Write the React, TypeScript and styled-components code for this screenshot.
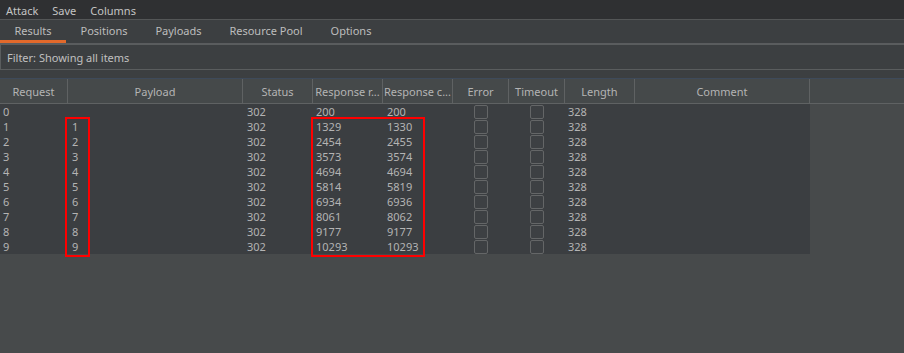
import React from 'react';
import { styled, createGlobalStyle } from 'styled-components';

const GlobalStyle = createGlobalStyle`
  html, body {
    margin: 0;
    padding: 0;
    background: #3c3f41;
    width: 904px;
    height: 353px;
    overflow: hidden;
  }
  * { box-sizing: border-box; }
`;

const Page = styled.div`
  width: 904px;
  height: 353px;
  display: flex;
  flex-direction: column;
  background: #3c3f41;
  font-family: 'Noto Sans', 'Open Sans', sans-serif;
  font-size: 11px;
  color: #bbbbbb;
`;

const MenuBar = styled.div`
  height: 20px;
  background: #2f3032;
  display: flex;
  align-items: center;
  gap: 14px;
  padding: 1px 0 0 6px;
  border-bottom: 1px solid #545657;
`;

const MenuItem = styled.span`
  color: #c4c4c4;
`;

const TabBar = styled.div`
  height: 24px;
  display: flex;
  align-items: stretch;
  border-bottom: 1px solid #5a5c5e;
`;

const Tab = styled.div<{ $active?: boolean; $w: number }>`
  width: ${(p) => p.$w}px;
  display: flex;
  justify-content: center;
  align-items: center;
  padding-top: 1px;
  border-bottom: 3px solid ${(p) => (p.$active ? '#e2692b' : 'transparent')};
  color: #bdbdbd;
`;

const FilterBox = styled.div`
  height: 26px;
  border: 1px solid #5a5d5e;
  border-right: none;
  display: flex;
  align-items: center;
  padding-left: 6px;
  color: #c0c0c0;
`;

const Spacer = styled.div`
  height: 8px;
`;

const TableArea = styled.div`
  flex: 1;
  background: #474a4b;
  border-top: 1px solid #3e4a5a;
  position: relative;
`;

const cols = '68px 175px 70px 70px 70px 56px 56px 70px 175px 94px';

const HeaderRow = styled.div`
  display: grid;
  grid-template-columns: ${cols};
  height: 25px;
  background: #45494a;
  border-bottom: 1px solid #5f6263;
`;

const HeaderCell = styled.div<{ $last?: boolean }>`
  display: flex;
  align-items: center;
  justify-content: center;
  border-right: ${(p) => (p.$last ? 'none' : '1px solid #5f6263')};
  white-space: nowrap;
  overflow: hidden;
  color: #b4b4b4;
`;

const Body = styled.div`
  width: 810px;
  background: #3b3e41;
`;

const Row = styled.div`
  display: grid;
  grid-template-columns: 68px 175px 70px 70px 70px 56px 56px 70px 175px;
  height: 15px;
`;

const Cell = styled.div<{ $pad?: number }>`
  display: flex;
  align-items: center;
  padding-left: ${(p) => p.$pad ?? 3}px;
  color: #b4b4b4;
  line-height: 15px;
  overflow: hidden;
`;

const CheckCell = styled.div`
  display: flex;
  align-items: center;
  justify-content: center;
`;

const Check = styled.div`
  width: 14px;
  height: 14px;
  border: 1px solid #646667;
  border-radius: 2px;
  background: #3d4043;
`;

const Highlight = styled.div<{ $l: number; $w: number }>`
  position: absolute;
  top: 38px;
  left: ${(p) => p.$l}px;
  width: ${(p) => p.$w}px;
  height: 140px;
  border: 2px solid #ff0000;
`;

const headers = [
  'Request',
  'Payload',
  'Status',
  'Response r...',
  'Response c...',
  'Error',
  'Timeout',
  'Length',
  'Comment',
  '',
];

const rows = [
  ['0', '', '200', '200'],
  ['1', '1', '1329', '1330'],
  ['2', '2', '2454', '2455'],
  ['3', '3', '3573', '3574'],
  ['4', '4', '4694', '4694'],
  ['5', '5', '5814', '5819'],
  ['6', '6', '6934', '6936'],
  ['7', '7', '8061', '8062'],
  ['8', '8', '9177', '9177'],
  ['9', '9', '10293', '10293'],
];

const tabs: [string, number][] = [
  ['Results', 66],
  ['Positions', 76],
  ['Payloads', 73],
  ['Resource Pool', 102],
  ['Options', 68],
];

export default function App() {
  return (
    <Page>
      <GlobalStyle />
      <MenuBar>
        <MenuItem>Attack</MenuItem>
        <MenuItem>Save</MenuItem>
        <MenuItem>Columns</MenuItem>
      </MenuBar>
      <TabBar>
        {tabs.map(([t, w], i) => (
          <Tab key={t} $w={w} $active={i === 0}>
            {t}
          </Tab>
        ))}
      </TabBar>
      <FilterBox>Filter: Showing all items</FilterBox>
      <Spacer />
      <TableArea>
        <HeaderRow>
          {headers.map((h, i) => (
            <HeaderCell key={i} $last={i === headers.length - 1}>
              {h}
            </HeaderCell>
          ))}
        </HeaderRow>
        <Body>
          {rows.map((r) => (
            <Row key={r[0]}>
              <Cell>{r[0]}</Cell>
              <Cell $pad={4}>{r[1]}</Cell>
              <Cell $pad={4}>302</Cell>
              <Cell $pad={3}>{r[2]}</Cell>
              <Cell $pad={4}>{r[3]}</Cell>
              <CheckCell>
                <Check />
              </CheckCell>
              <CheckCell>
                <Check />
              </CheckCell>
              <Cell $pad={3}>328</Cell>
              <Cell />
            </Row>
          ))}
        </Body>
        <Highlight $l={65} $w={25} />
        <Highlight $l={311} $w={114} />
      </TableArea>
    </Page>
  );
}
